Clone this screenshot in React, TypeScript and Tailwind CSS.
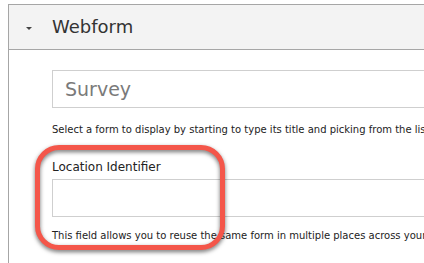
export default function App() {
  const font = { fontFamily: '"DejaVu Sans", Verdana, sans-serif' };
  return (
    <div className="relative w-[424px] h-[263px] overflow-hidden bg-white text-[#333]" style={font}>
      <div className="ml-[8px] mt-[4px] w-[560px] border-l border-t border-[#a6a6a6] h-[300px]">
        {/* header */}
        <div className="flex items-center h-[45px] bg-[#f3f3f3] border-b border-[#a6a6a6]">
          <span className="ml-[17px] w-0 h-0 border-l-[3px] border-r-[3px] border-t-[3px] border-l-transparent border-r-transparent border-t-[#444] mt-[2px]" />
          <span className="ml-[20px] text-[18px] leading-none text-[#333]">Webform</span>
        </div>

        {/* body */}
        <div className="pl-[43px] pt-[20px]">
          <div className="h-[38px] border border-[#cfcfcf] flex items-center pl-[12px]">
            <span className="text-[19px] text-[#7a7a7a] leading-none">Survey</span>
          </div>
          <p className="mt-[15px] text-[10px] leading-[14px] text-[#222] whitespace-nowrap">
            Select a form to display by starting to type its title and picking from the list.
          </p>

          <label className="block mt-[23px] text-[12px] leading-[14px] text-[#222]">Location Identifier</label>
          <div className="mt-[5px] h-[38px] border border-[#cfcfcf]" />
          <p className="mt-[12px] text-[10px] leading-[14px] text-[#222] whitespace-nowrap">
            This field allows you to reuse the same form in multiple places across your site.
          </p>
        </div>
      </div>

      {/* annotation */}
      <div className="absolute left-[35px] top-[145px] w-[190px] h-[105px] rounded-[24px] border-[5px] border-[#f4564a] [filter:drop-shadow(0_2px_2px_rgba(0,0,0,0.55))]" />
    </div>
  );
}
